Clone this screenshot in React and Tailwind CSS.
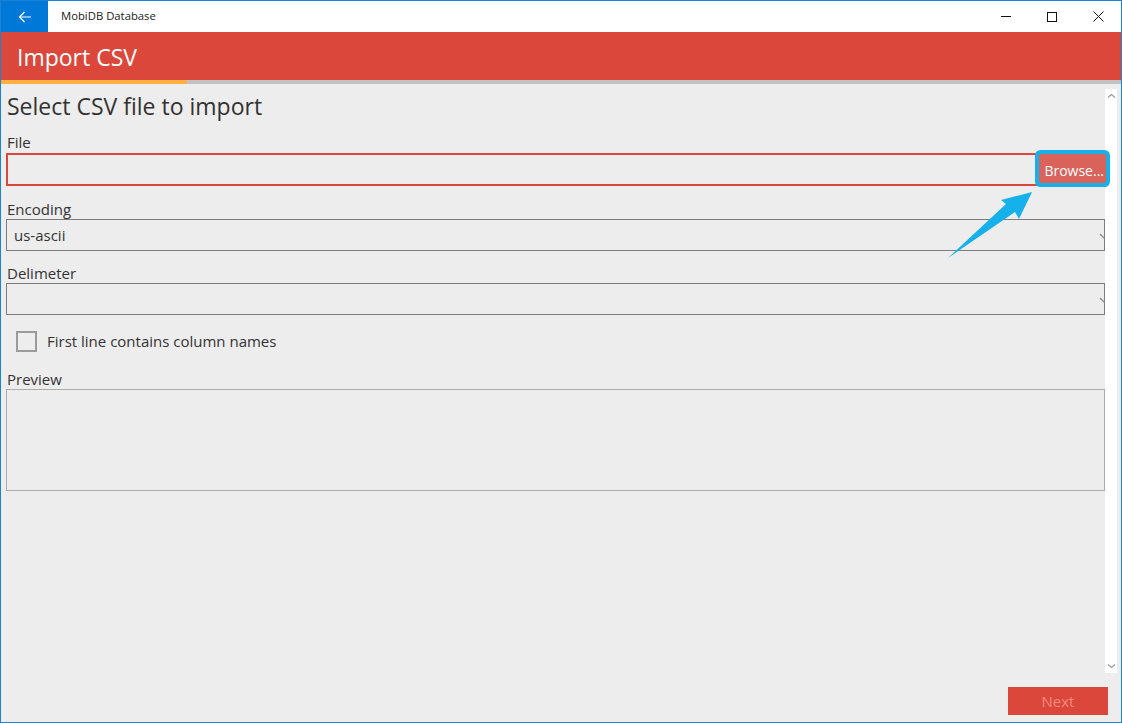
import React from "react";

const font = { fontFamily: '"Open Sans", "Noto Sans", sans-serif' };

function Label({ children, className = "" }) {
  return (
    <div className={"text-[15px] leading-[19px] text-[#333333] " + className}>{children}</div>
  );
}

function Chevron({ dir = "down", className = "" }) {
  return (
    <svg width="9" height="6" viewBox="0 0 9 6" className={className}>
      {dir === "down" ? (
        <path d="M1 1.5 L4.5 4.5 L8 1.5" fill="none" stroke="#9a9a9a" strokeWidth="1.2" />
      ) : (
        <path d="M1 4.5 L4.5 1.5 L8 4.5" fill="none" stroke="#9a9a9a" strokeWidth="1.2" />
      )}
    </svg>
  );
}

function Select({ value }) {
  return (
    <div className="relative h-[32px] border border-[#7d7d7d] flex items-center pl-[7px] text-[15px] text-[#333333]">
      <span>{value}</span>
      <svg width="10" height="6" viewBox="0 0 10 6" className="absolute right-[-5px] top-[13px]">
        <path d="M1 1 L5 5 L9 1" fill="none" stroke="#8a8a8a" strokeWidth="1.3" />
      </svg>
    </div>
  );
}

export default function App() {
  return (
    <div
      className="relative w-[1122px] h-[723px] border border-[#1883d7] bg-[#ededed] flex flex-col overflow-hidden"
      style={font}
    >
      {/* Title bar */}
      <div className="h-[31px] bg-white flex items-center shrink-0">
        <div className="w-[47px] h-full bg-[#0078d7] flex items-center justify-center">
          <svg width="14" height="12" viewBox="0 0 14 12">
            <path d="M13 6 H1.5 M6.5 1 L1.5 6 L6.5 11" fill="none" stroke="#ffffff" strokeWidth="1.2" />
          </svg>
        </div>
        <div className="ml-[13px] text-[11.3px] text-[#1a1a1a]">MobiDB Database</div>
        <div className="flex-1" />
        <div className="flex h-full">
          <div className="w-[46px] h-full flex items-center justify-center">
            <div className="w-[10px] h-px bg-[#111]" />
          </div>
          <div className="w-[46px] h-full flex items-center justify-center">
            <div className="w-[10px] h-[10px] border border-[#111]" />
          </div>
          <div className="w-[46px] h-full flex items-center justify-center">
            <svg width="11" height="11" viewBox="0 0 11 11">
              <path d="M0.5 0.5 L10.5 10.5 M10.5 0.5 L0.5 10.5" stroke="#111" strokeWidth="1" />
            </svg>
          </div>
        </div>
      </div>

      {/* Header */}
      <div className="h-[48px] bg-[#dc473b] flex items-center pl-[16px] shrink-0">
        <span className="text-[23px] text-white leading-none pt-[2px]">Import CSV</span>
      </div>
      <div className="h-[4px] flex shrink-0">
        <div className="w-[186px] bg-[#fcb040]" />
        <div className="flex-1 bg-[#c2c2c2]" />
      </div>

      {/* Body */}
      <div className="flex-1 flex min-h-0">
        <div className="flex-1 flex flex-col pl-[5px] pt-[7px]">
          <div className="text-[23px] leading-[30px] text-[#333333] pl-[1px]">Select CSV file to import</div>

          <Label className="mt-[12px] pl-[1px]">File</Label>
          <div className="mt-px flex h-[33px]">
            <div className="flex-1 border-2 border-r-0 border-[#dc473b]" />
            <div className="relative z-10 w-[67px] h-[29px] mt-px -mr-px bg-[#d9625a] rounded-[2px] ring-4 ring-[#19b0ea] flex items-center justify-end pr-[2px] pt-[3px] text-[14px] text-white">
              Browse...
            </div>
          </div>

          <Label className="mt-[14px] pl-[1px]">Encoding</Label>
          <Select value="us-ascii" />

          <Label className="mt-[13px] pl-[1px]">Delimeter</Label>
          <Select value="" />

          <div className="mt-[16px] flex items-center pl-[10px] h-[21px]">
            <div className="w-[21px] h-[21px] border-2 border-[#9b9b9b]" />
            <span className="ml-[10px] text-[15px] text-[#333333]">First line contains column names</span>
          </div>

          <Label className="mt-[18px] pl-[1px]">Preview</Label>
          <div className="h-[102px] border border-[#ababab]" />
        </div>

        {/* Scrollbar */}
        <div className="relative z-[5] w-[12px] bg-white mt-[5px] mb-[1px] flex flex-col items-center justify-between py-[4px]">
          <Chevron dir="up" />
          <Chevron dir="down" />
        </div>
        <div className="w-[4px]" />
      </div>

      {/* Footer */}
      <div className="h-[48px] shrink-0 flex justify-end items-start pt-[13px] pr-[13px]">
        <div className="w-[100px] h-[28px] bg-[#dc473b] flex items-center justify-center text-[15px] text-[#f28a7f]">
          Next
        </div>
      </div>

      {/* Annotation arrow */}
      <svg
        className="absolute left-[-1px] top-[-1px] pointer-events-none z-20"
        width="1122"
        height="723"
        viewBox="0 0 1122 723"
      >
        <polygon
          points="948,258 1006,204 1001,200 1032,192 1019,219 1015,212"
          fill="#16b0ea"
        />
      </svg>
    </div>
  );
}
